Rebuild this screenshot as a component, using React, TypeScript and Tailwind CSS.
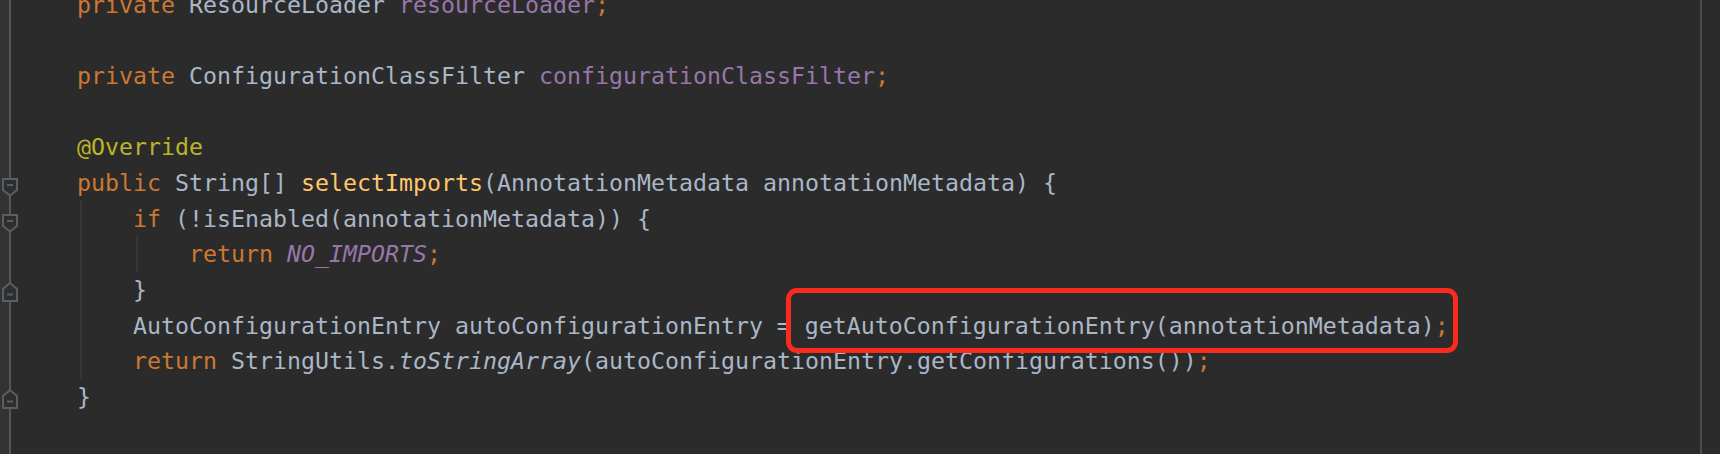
import React from "react";

type Tok = [string, string];

const K = "text-[#cc7832]";
const D = "text-[#a9b7c6]";
const F = "text-[#9876aa]";
const M = "text-[#ffc66d]";
const A = "text-[#bbb529]";
const FI = "text-[#9876aa] italic";
const DI = "text-[#a9b7c6] italic";

const lines: Tok[][] = [
  [["    ", D], ["private", K], [" ResourceLoader ", D], ["resourceLoader", F], [";", K]],
  [],
  [["    ", D], ["private", K], [" ConfigurationClassFilter ", D], ["configurationClassFilter", F], [";", K]],
  [],
  [["    ", D], ["@Override", A]],
  [["    ", D], ["public", K], [" String[] ", D], ["selectImports", M], ["(AnnotationMetadata annotationMetadata) {", D]],
  [["        ", D], ["if", K], [" (!isEnabled(annotationMetadata)) {", D]],
  [["            ", D], ["return", K], [" ", D], ["NO_IMPORTS", FI], [";", K]],
  [["        }", D]],
  [["        AutoConfigurationEntry autoConfigurationEntry = getAutoConfigurationEntry(annotationMetadata)", D], [";", K]],
  [["        ", D], ["return", K], [" StringUtils.", D], ["toStringArray", DI], ["(autoConfigurationEntry.getConfigurations())", D], [";", K]],
  [["    }", D]],
  [],
];

function FoldStart() {
  return (
    <svg width="18" height="20" viewBox="0 0 18 20" className="absolute left-[1px] top-[12px]">
      <path d="M2 2 H16 V13 L9 18.5 L2 13 Z" fill="#2d2e30" stroke="#5c5d5e" strokeWidth="2" strokeLinejoin="miter" />
      <path d="M6 8 H12" stroke="#5c5d5e" strokeWidth="2" />
    </svg>
  );
}

function FoldEnd() {
  return (
    <svg width="18" height="22" viewBox="0 0 18 22" className="absolute left-[1px] top-[9px]">
      <path d="M2 20 H16 V8 L9 2 L2 8 Z" fill="#2d2e30" stroke="#5c5d5e" strokeWidth="2" strokeLinejoin="miter" />
      <path d="M6 13.5 H12" stroke="#5c5d5e" strokeWidth="2" />
    </svg>
  );
}

const folds: Record<number, "s" | "e"> = { 5: "s", 6: "s", 8: "e", 11: "e" };

export default function App() {
  return (
    <div className="relative h-[454px] w-[1720px] overflow-hidden bg-[#2b2b2b] flex">
      {/* gutter */}
      <div className="relative w-[21px] h-full flex shrink-0">
        <div className="w-[9px] h-full bg-[#313335]" />
        <div className="w-[2px] h-full bg-[#555657]" />
      </div>
      {/* code */}
      <div className="relative w-[1679px] shrink-0 h-full">
        <div className="mt-[-13.5px] font-['DejaVu_Sans_Mono',monospace] text-[23.25px] leading-[35.7px] whitespace-pre">
          {lines.map((toks, i) => (
            <div key={i} className="relative h-[35.7px]">
              {folds[i] && (
                <div className="absolute left-[-21px] top-0 w-[21px] h-full">
                  {folds[i] === "s" ? <FoldStart /> : <FoldEnd />}
                </div>
              )}
              {toks.map(([t, c], j) => (
                <span key={j} className={c}>
                  {t}
                </span>
              ))}
            </div>
          ))}
        </div>
        {/* indent guides */}
        <div className="absolute left-[59px] top-[200.6px] h-[178.5px] w-[2px] bg-[#373737]" />
        <div className="absolute left-[115px] top-[236.3px] h-[35.7px] w-[2px] bg-[#373737]" />
      </div>
      {/* right margin */}
      <div className="w-[2px] h-full bg-[#4b4b4b] shrink-0" />
      <div className="flex-1" />
      {/* highlight box */}
      <div className="absolute left-[786px] top-[288px] w-[672px] h-[65px] border-[5px] border-[#fb2a1e] rounded-[11px]" />
    </div>
  );
}
